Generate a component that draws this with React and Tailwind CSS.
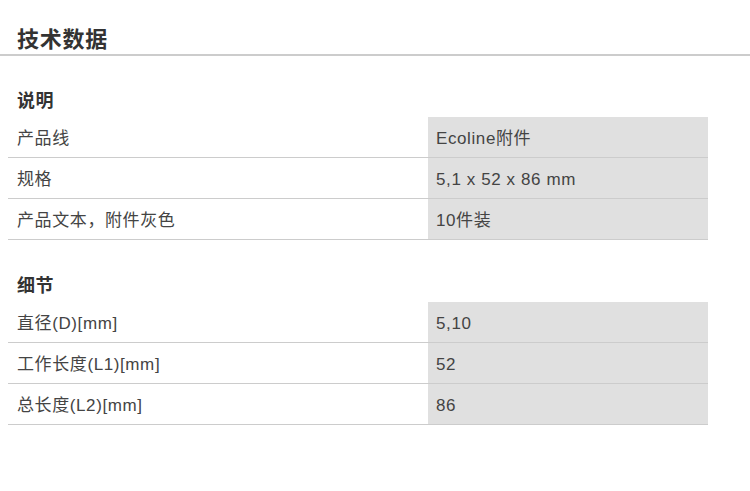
const sections = [
  {
    title: "说明",
    rows: [
      ["产品线", "Ecoline附件"],
      ["规格", "5,1 x 52 x 86 mm"],
      ["产品文本，附件灰色", "10件装"],
    ],
  },
  {
    title: "细节",
    rows: [
      ["直径(D)[mm]", "5,10"],
      ["工作长度(L1)[mm]", "52"],
      ["总长度(L2)[mm]", "86"],
    ],
  },
];

const font = {
  fontFamily: '"Liberation Sans", "Noto Sans CJK SC", sans-serif',
};

export default function App() {
  return (
    <div className="w-[750px] h-[491px] bg-white text-[#333]" style={font}>
      <div className="h-[56px] flex items-end px-[17px] border-b-2 border-[#cccccc]">
        <h1 className="text-[22px] leading-[28px] tracking-[0.75px] font-bold text-[#333]">技术数据</h1>
      </div>

      <div className="pl-[8px] w-[708px]">
        {sections.map((section, i) => (
          <div key={section.title} className={i === 0 ? "mt-[33px]" : "mt-[34px]"}>
            <h2 className="px-[9px] h-[24px] leading-[24px] text-[18px] tracking-[0.5px] font-bold text-[#333] mb-[4px]">
              {section.title}
            </h2>
            <div>
              {section.rows.map(([label, value]) => (
                <div
                  key={label}
                  className="grid grid-cols-[420px_280px] h-[41px] border-b border-[#cccccc] text-[17px] tracking-[0.6px] text-[#444]"
                >
                  <div className="flex items-center px-[9px] pt-[3px]">{label}</div>
                  <div className="flex items-center px-[8px] pt-[3px] bg-[#e0e0e0]">{value}</div>
                </div>
              ))}
            </div>
          </div>
        ))}
      </div>
    </div>
  );
}
